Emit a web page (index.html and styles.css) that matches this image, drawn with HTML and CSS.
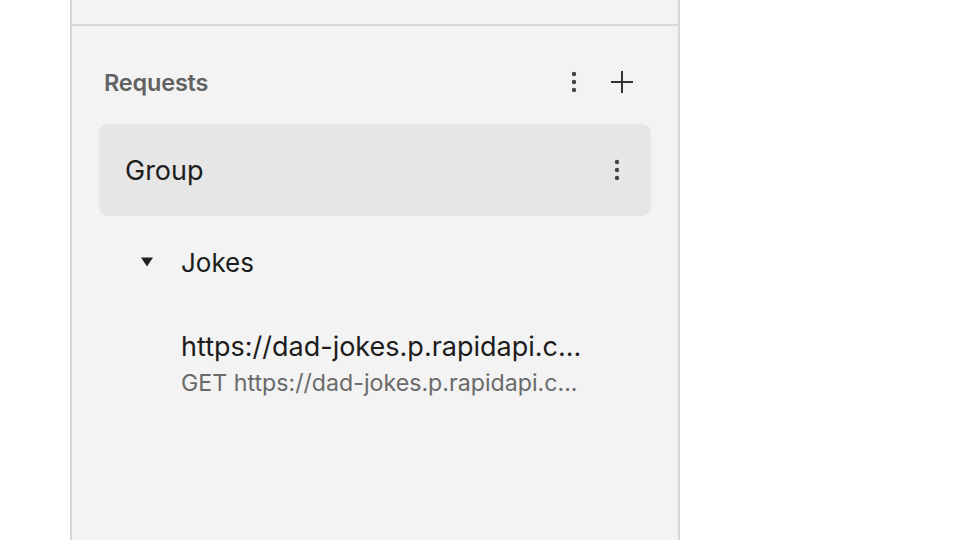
FILE: index.html
```html
<!DOCTYPE html>
<html>
<head>
<meta charset="utf-8">
<link rel="stylesheet" href="styles.css">
</head>
<body>
<div class="page">
  <aside class="panel">
    <div class="top"></div>
    <div class="section">
      <div class="header">
        <span class="title">Requests</span>
        <div class="actions">
          <svg class="kebab" width="6" height="22" viewBox="0 0 6 22"><circle cx="3" cy="3" r="2.2"/><circle cx="3" cy="11" r="2.2"/><circle cx="3" cy="19" r="2.2"/></svg>
          <svg class="plus" width="24" height="24" viewBox="0 0 24 24"><path d="M12 1v22M1 12h22"/></svg>
        </div>
      </div>
      <div class="group">
        <span class="group-name">Group</span>
        <svg class="kebab" width="6" height="22" viewBox="0 0 6 22"><circle cx="3" cy="3" r="2.2"/><circle cx="3" cy="11" r="2.2"/><circle cx="3" cy="19" r="2.2"/></svg>
      </div>
      <div class="folder">
        <svg class="caret" width="14" height="10" viewBox="0 0 14 10"><path d="M1 0.5h12L7 9.5z"/></svg>
        <span class="folder-name">Jokes</span>
      </div>
      <div class="request">
        <div class="req-title">https://dad-jokes.p.rapidapi.c...</div>
        <div class="req-sub">GET https://dad-jokes.p.rapidapi.c...</div>
      </div>
    </div>
  </aside>
</div>
</body>
</html>
```
FILE: styles.css
```css
html, body {
  margin: 0;
  padding: 0;
  background: #ffffff;
}
body {
  font-family: Inter, "Noto Sans", sans-serif;
  color: #1c1c1c;
}
.page {
  height: 540px;
  padding-left: 70px;
  overflow: hidden;
}
.panel {
  width: 606px;
  height: 540px;
  background: #f3f3f3;
  border-left: 2px solid #d6d6d6;
  border-right: 2px solid #d6d6d6;
  display: flex;
  flex-direction: column;
}
.top {
  height: 24px;
  border-bottom: 2px solid #d8d8d8;
}
.section {
  padding: 0 27px;
  display: flex;
  flex-direction: column;
}
.header {
  height: 98px;
  box-sizing: border-box;
  padding: 14px 0 0 5px;
  display: flex;
  align-items: center;
  justify-content: space-between;
}
.title {
  font-size: 23.5px;
  font-weight: 600;
  color: #626262;
  letter-spacing: -0.2px;
}
.actions {
  display: flex;
  align-items: center;
  gap: 33px;
  padding-right: 17px;
}
.kebab {
  fill: #444;
  display: block;
}
.plus {
  display: block;
  stroke: #333;
  stroke-width: 2;
  fill: none;
}
.group {
  height: 92px;
  background: #e6e6e6;
  border-radius: 9px;
  display: flex;
  align-items: center;
  justify-content: space-between;
  padding: 0 31px 0 26px;
}
.group-name {
  font-size: 27px;
  color: #1c1c1c;
}
.folder {
  height: 92px;
  display: flex;
  align-items: center;
  padding-left: 41px;
}
.caret {
  fill: #222;
  display: block;
  margin-right: 27px;
}
.folder-name {
  font-size: 26px;
  color: #1c1c1c;
}
.request {
  padding-left: 82px;
  padding-top: 23px;
}
.req-title {
  font-size: 27px;
  color: #1c1c1c;
  line-height: 32px;
}
.req-sub {
  font-size: 23.2px;
  color: #6a6a6a;
  line-height: 32px;
  margin-top: 4px;
}
```
